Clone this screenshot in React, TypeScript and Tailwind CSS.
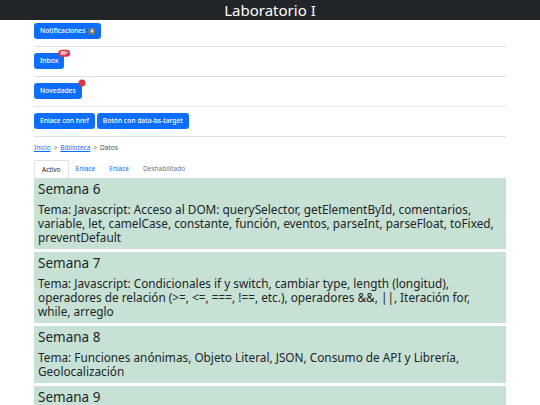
const weeks = [
  {
    title: "Semana 6",
    text: "Tema: Javascript: Acceso al DOM: querySelector, getElementById, comentarios, variable, let, camelCase, constante, función, eventos, parseInt, parseFloat, toFixed, preventDefault",
  },
  {
    title: "Semana 7",
    text: "Tema: Javascript: Condicionales if y switch, cambiar type, length (longitud), operadores de relación (>=, <=, ===, !==, etc.), operadores &&, ||, Iteración for, while, arreglo",
  },
  {
    title: "Semana 8",
    text: "Tema: Funciones anónimas, Objeto Literal, JSON, Consumo de API y Librería, Geolocalización",
  },
  {
    title: "Semana 9",
    text: "Tema: Eventos, localStorage, sessionStorage, fetch, promesas",
  },
];

function Btn({ children }: { children: React.ReactNode }) {
  return (
    <button className="relative flex h-4 items-center gap-[2px] rounded-[3px] bg-[#0d6efd] px-[6px] text-[6.7px] font-medium leading-none text-white">
      {children}
    </button>
  );
}

function Row({ children, first }: { children: React.ReactNode; first?: boolean }) {
  return (
    <div
      className={
        first
          ? "flex gap-[2px] border-b border-[#dee2e6] pt-[3px] pb-[7px]"
          : "flex gap-[2px] border-b border-[#dee2e6] pt-[6px] pb-[7px]"
      }
    >
      {children}
    </div>
  );
}

export default function App() {
  return (
    <div className="min-h-[405px] bg-white font-['Noto_Sans',sans-serif] text-[#212529]">
      <header className="h-5 bg-[#212529] text-center text-[15px] leading-5 text-white">
        Laboratorio I
      </header>

      <div className="mx-auto w-[472px]">
        <Row first>
          <Btn>
            Notificaciones
            <span className="ml-[1px] rounded-[2px] bg-[#6c757d] px-[2px] py-[1px] text-[5px] font-bold">4</span>
          </Btn>
        </Row>

        <Row>
          <Btn>
            Inbox
            <span className="absolute top-0 left-full -translate-x-1/2 -translate-y-1/2 rounded-full bg-[#dc3545] px-[2px] py-[1px] text-[4.5px] font-bold">
              99+
            </span>
          </Btn>
        </Row>

        <Row>
          <Btn>
            Novedades
            <span className="absolute top-0 left-full h-[7px] w-[7px] -translate-x-1/2 -translate-y-1/2 rounded-full bg-[#dc3545]" />
          </Btn>
        </Row>

        <Row>
          <Btn>Enlace con href</Btn>
          <Btn>Botón con data-bs-target</Btn>
        </Row>

        <nav className="mt-[6px] flex items-center gap-[3px] text-[6.5px] leading-[10px] text-[#6c757d]">
          <a className="text-[#0d6efd] underline">Inicio</a>
          <span>&gt;</span>
          <a className="text-[#0d6efd] underline">Biblioteca</a>
          <span>&gt;</span>
          <span className="text-[#495057]">Datos</span>
        </nav>

        <ul className="mt-[7px] flex h-[18px] text-[6.5px]">
          <li className="flex items-center rounded-t-[3px] border border-b-0 border-[#dee2e6] px-[7px] text-[#212529]">
            Activo
          </li>
          <li className="flex items-center px-[7px] text-[#0d6efd]">Enlace</li>
          <li className="flex items-center px-[7px] text-[#0d6efd]">Enlace</li>
          <li className="flex items-center px-[7px] text-[#6c757d]">Deshabilitado</li>
        </ul>

        <div className="flex flex-col gap-[3px]">
          {weeks.map((w) => (
            <section key={w.title} className="bg-[#c7e2d4] px-1 pt-[2px] pb-[5px]">
              <h2 className="text-[13.5px] leading-[18px]">{w.title}</h2>
              <p className="mt-1 text-[11.8px] leading-[14px]">{w.text}</p>
            </section>
          ))}
        </div>
      </div>
    </div>
  );
}
